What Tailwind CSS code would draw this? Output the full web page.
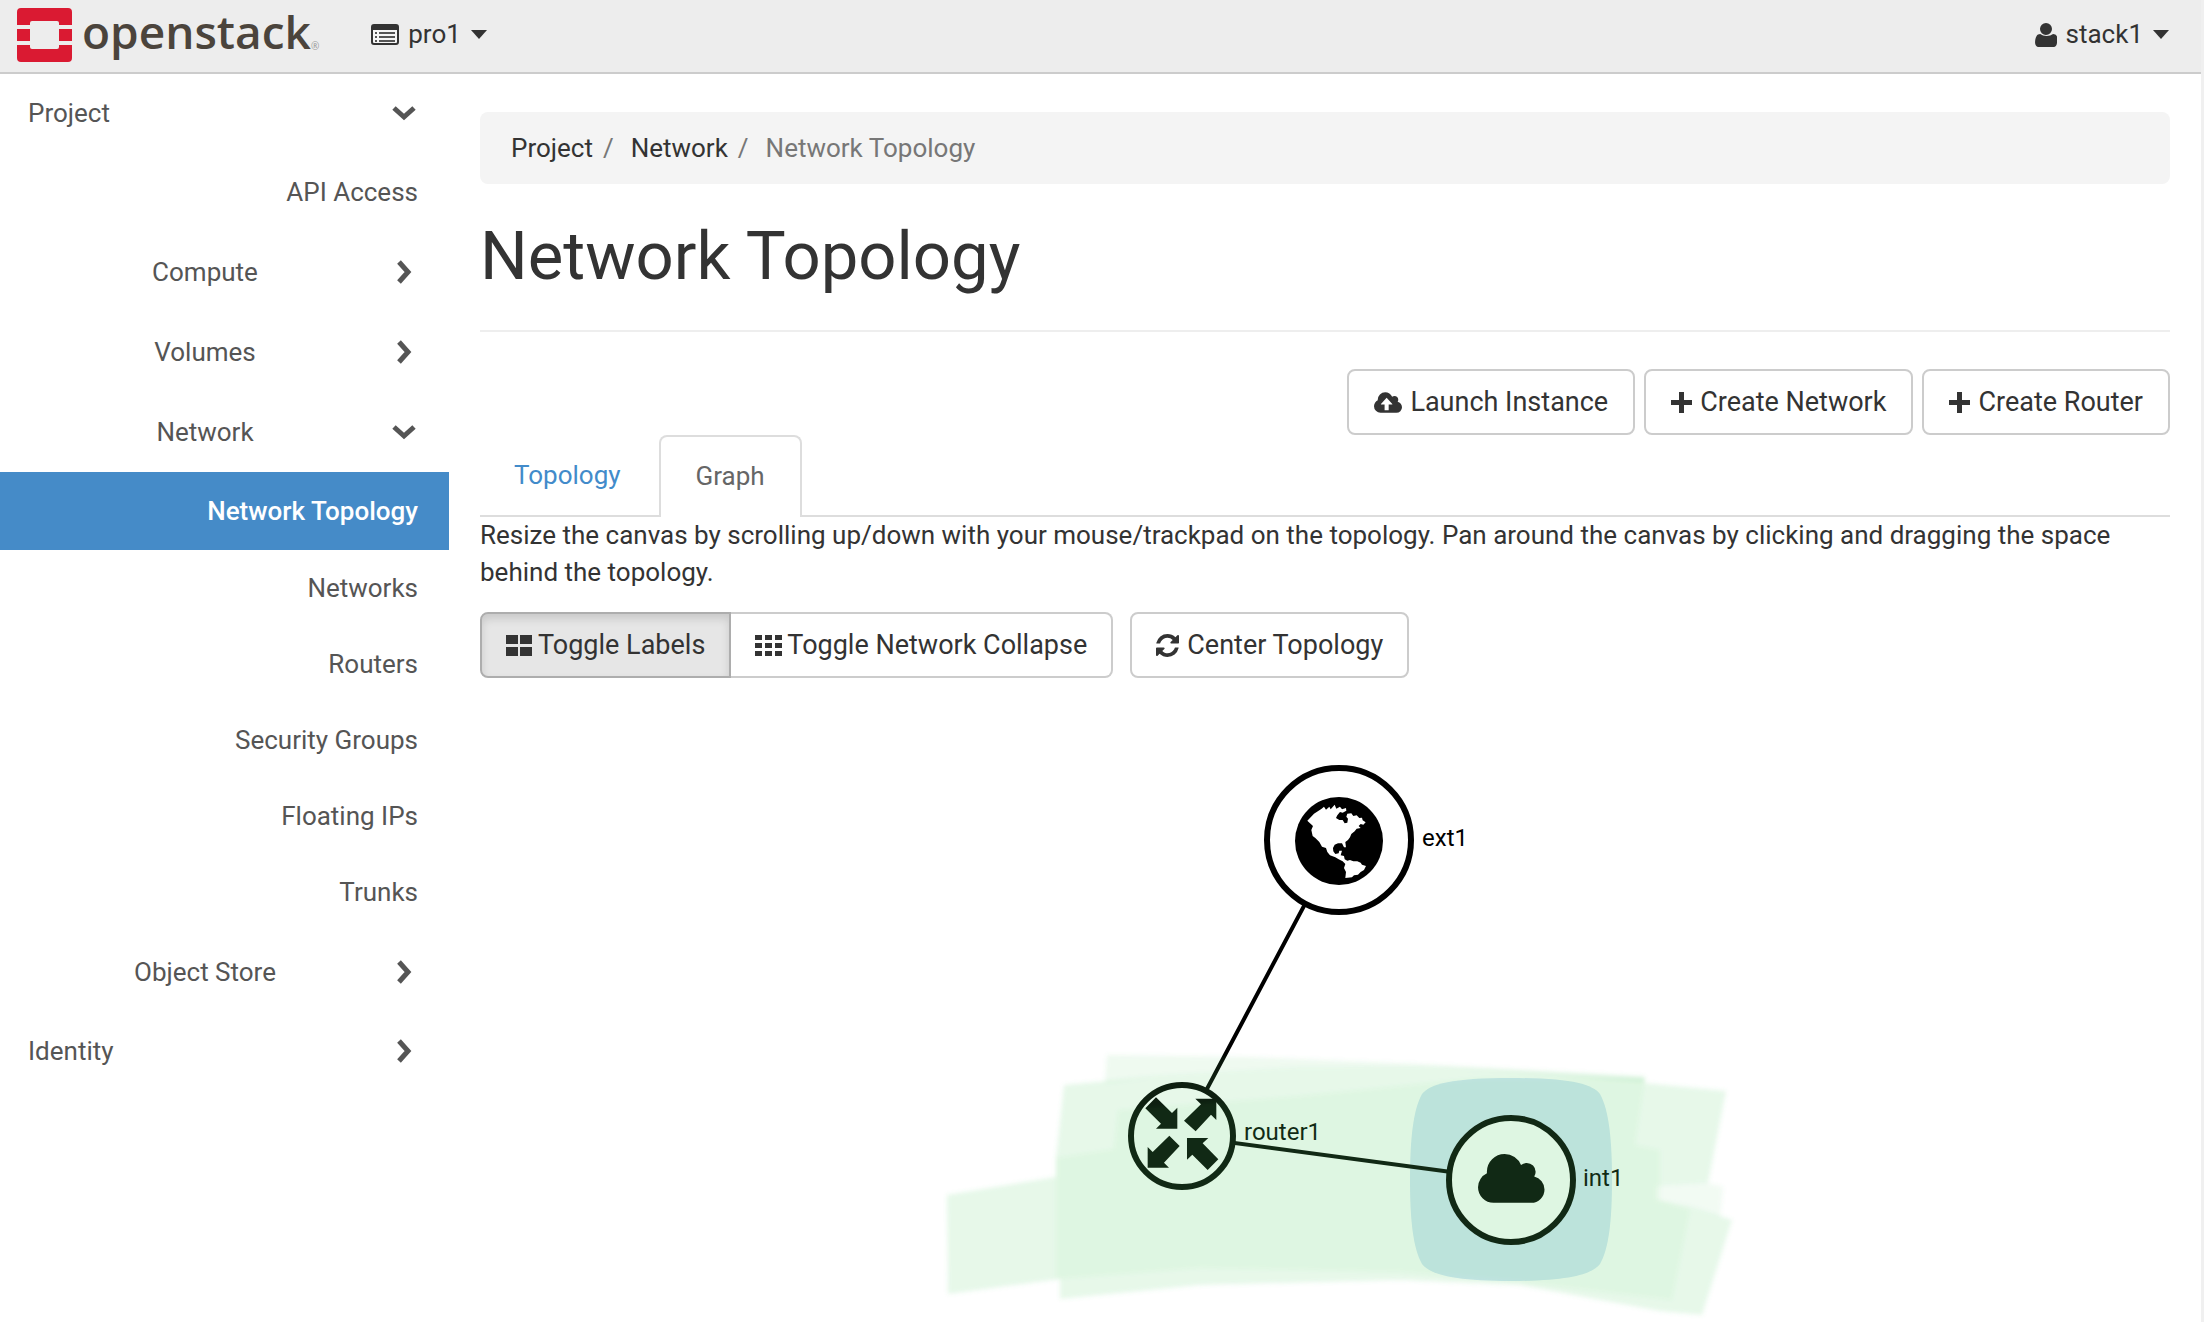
<!DOCTYPE html>
<html lang="en">
<head>
<meta charset="utf-8">
<title>Network Topology - OpenStack Dashboard</title>
<script src="https://cdn.jsdelivr.net/npm/@tailwindcss/browser@4"></script>
</head>
<body class="min-h-screen border-r-[3px] border-[#f0f0f0] bg-white font-['Roboto',sans-serif] text-[26px] leading-[37px] text-[#333]">
<svg class="hidden" aria-hidden="true">
  <symbol id="right" viewBox="0 0 28 28"><path d="M9 4l9 10-9 10" fill="none" stroke="currentColor" stroke-width="5"/></symbol>
  <symbol id="down" viewBox="0 0 28 28"><path d="M4 9l10 9 10-9" fill="none" stroke="currentColor" stroke-width="5"/></symbol>
  <symbol id="caret" viewBox="0 0 16 9"><path d="M0 0h16L8 9z" fill="currentColor"/></symbol>
  <symbol id="plus" viewBox="0 0 21 21"><path d="M8 0h5v8h8v5h-8v8H8v-8H0V8h8z" fill="currentColor"/></symbol>
</svg>

<header class="flex h-[74px] items-center border-b-2 border-[#ccc] bg-[#ededed] pr-[32px] pb-[3px] pl-[17px]">
  <a href="#" class="flex items-center text-[#4b443c]" aria-label="openstack">
    <svg class="h-[54px] w-[55px]" viewBox="0 0 55 54" fill="#da1a32"><path d="M4 0h47a4 4 0 0 1 4 4v13H42v-2a2 2 0 0 0-2-2H15a2 2 0 0 0-2 2v2H0V4a4 4 0 0 1 4-4zM0 21h13v12H0zM42 21h13v12H42zM0 37h13v2a2 2 0 0 0 2 2h25a2 2 0 0 0 2-2v-2h13v13a4 4 0 0 1-4 4H4a4 4 0 0 1-4-4z"/></svg>
    <span class="flex items-end pb-2 pl-[10px] font-['Open_Sans',sans-serif] text-[46px] leading-[54px] font-semibold">openstack<small class="text-[10px] leading-[24px] font-normal text-[#999]">®</small></span>
  </a>
  <button class="ml-[52px] flex items-center">
    <svg class="mr-[9px] h-[21px] w-[28px]" viewBox="0 0 28 21"><rect x="1" y="1" width="26" height="19" rx="2" fill="#f6f6f6" stroke="#333" stroke-width="2"/><path d="M1 1h26v5H1z" fill="#333"/><path d="M4 9h2M4 13h2M4 17h2M8 9h16M8 13h16M8 17h16" stroke="#555" stroke-width="2"/></svg>
    pro1<svg class="ml-[10px] h-[9px] w-[16px]"><use href="#caret"/></svg>
  </button>
  <button class="ml-auto flex items-center">
    <svg class="mr-[9px] h-[24px] w-[22px]" viewBox="192 128 1408 1536" preserveAspectRatio="none" fill="#333"><path d="M1600 1399q0 109-62.500 187t-150.500 78h-978q-88 0-150.500-78t-62.500-187q0-85 8.500-160.500t31.500-152 58.500-131 94-89 134.500-34.500q161 128 413 128t413-128q76 0 134.500 34.500t94 89 58.500 131 31.500 152 8.500 160.500zm-320-887q0 159-112.500 271.500t-271.500 112.500-271.500-112.500-112.500-271.500 112.500-271.500 271.500-112.500 271.500 112.500 112.500 271.500z"/></svg>
    stack1<svg class="ml-[10px] h-[9px] w-[16px]"><use href="#caret"/></svg>
  </button>
</header>

<div class="flex">
  <nav class="w-[449px] shrink-0 text-[#555]">
    <a href="#" class="flex h-[78px] items-center justify-between pr-[31px] pl-[28px]">Project<svg class="size-[28px]"><use href="#down"/></svg></a>
    <a href="#" class="flex h-[80px] items-center justify-end pr-[31px]">API Access</a>
    <a href="#" class="flex h-[80px] items-center pr-[31px] pl-[20px]"><span class="flex-1 text-center">Compute</span><svg class="size-[28px]"><use href="#right"/></svg></a>
    <a href="#" class="flex h-[80px] items-center pr-[31px] pl-[20px]"><span class="flex-1 text-center">Volumes</span><svg class="size-[28px]"><use href="#right"/></svg></a>
    <a href="#" class="flex h-[80px] items-center pr-[31px] pl-[20px]"><span class="flex-1 text-center">Network</span><svg class="size-[28px]"><use href="#down"/></svg></a>
    <a href="#" aria-current="page" class="flex h-[78px] items-center justify-end bg-[#458bc8] pr-[31px] font-medium text-white">Network Topology</a>
    <a href="#" class="flex h-[76px] items-center justify-end pr-[31px]">Networks</a>
    <a href="#" class="flex h-[76px] items-center justify-end pr-[31px]">Routers</a>
    <a href="#" class="flex h-[76px] items-center justify-end pr-[31px]">Security Groups</a>
    <a href="#" class="flex h-[76px] items-center justify-end pr-[31px]">Floating IPs</a>
    <a href="#" class="flex h-[76px] items-center justify-end pr-[31px]">Trunks</a>
    <a href="#" class="mt-[2px] flex h-[80px] items-center pr-[31px] pl-[20px]"><span class="flex-1 text-center">Object Store</span><svg class="size-[28px]"><use href="#right"/></svg></a>
    <a href="#" class="flex h-[78px] items-center justify-between pr-[31px] pl-[28px]">Identity<svg class="size-[28px]"><use href="#right"/></svg></a>
  </nav>

  <main class="min-w-0 flex-1 pt-[38px] pr-[31px] pl-[31px]">
    <ol class="flex h-[72px] items-center rounded-lg bg-[#f4f4f4] px-[31px] text-[#777]">
      <li><a href="#" class="text-[#333]">Project</a></li>
      <li><span class="pr-[17px] pl-[10px]">/</span><a href="#" class="text-[#333]">Network</a></li>
      <li><span class="pr-[17px] pl-[10px]">/</span>Network Topology</li>
    </ol>
    <h1 class="mt-[36px] border-b-2 border-[#eee] pb-[38px] text-[67px] leading-[72px]">Network Topology</h1>

    <div class="mt-[37px] flex justify-end gap-[9px] text-[27px]">
      <button class="flex h-[66px] items-center gap-2 rounded-lg border-2 border-[#ccc] px-[25px]"><svg class="h-[21px] w-[28px]" viewBox="64 128 1920 1408" fill="#333"><path fill-rule="evenodd" d="M1984 1152q0 159-112.500 271.500t-271.500 112.500h-1088q-185 0-316.500-131.500t-131.500-316.500q0-132 71-241.500t187-163.500q-2-28-2-43 0-212 150-362t362-150q158 0 286.500 88t187.500 230q70-62 166-62 106 0 181 75t75 181q0 75-41 138 129 30 213 134.500t84 239.500zM1320 928L930 500 540 928v40h250v392h280V968h250z"/></svg>Launch Instance</button>
      <button class="flex h-[66px] items-center gap-2 rounded-lg border-2 border-[#ccc] px-[25px]"><svg class="size-[21px]"><use href="#plus"/></svg>Create Network</button>
      <button class="flex h-[66px] items-center gap-2 rounded-lg border-2 border-[#ccc] px-[25px]"><svg class="size-[21px]"><use href="#plus"/></svg>Create Router</button>
    </div>

    <div class="flex h-[82px] gap-[4px] border-b-2 border-[#ddd]" role="tablist">
      <a href="#" role="tab" class="flex items-center px-[34px] text-[#428bca]">Topology</a>
      <a href="#" role="tab" aria-selected="true" class="-mb-[2px] flex items-center rounded-t-lg border-2 border-b-0 border-[#ddd] bg-white px-[35px] pb-[2px] text-[#666]">Graph</a>
    </div>
    <p>Resize the canvas by scrolling up/down with your mouse/trackpad on the topology. Pan around the canvas by clicking and dragging the space behind the topology.</p>

    <div class="mt-[21px] flex text-[27px]">
      <button aria-pressed="true" class="flex h-[66px] items-center gap-[6px] rounded-l-lg border-2 border-[#adadad] bg-[#e6e6e6] px-[24px] shadow-[inset_0_5px_9px_rgba(0,0,0,0.125)]"><svg class="h-[21px] w-[26px]" viewBox="0 0 26 21" fill="#333"><path d="M0 0h12v9H0zM14 0h12v9H14zM0 12h12v9H0zM14 12h12v9H14z"/></svg>Toggle Labels</button>
      <button class="flex h-[66px] items-center gap-[5px] rounded-r-lg border-2 border-l-0 border-[#ccc] px-[24px]"><svg class="h-[21px] w-[27px]" viewBox="0 0 27 21" fill="#333"><path d="M0 0h7v5H0zM10 0h7v5h-7zM20 0h7v5h-7zM0 8h7v5H0zM10 8h7v5h-7zM20 8h7v5h-7zM0 16h7v5H0zM10 16h7v5h-7zM20 16h7v5h-7z"/></svg>Toggle Network Collapse</button>
      <button class="ml-[17px] flex h-[66px] items-center gap-2 rounded-lg border-2 border-[#ccc] px-[24px]"><svg class="size-[23px]" viewBox="128 128 1536 1536" fill="#333"><path d="M1639 1056q0 5-1 7-64 268-268 434.500t-478 166.500q-146 0-282.500-55t-243.500-157l-129 129q-19 19-45 19t-45-19-19-45v-448q0-26 19-45t45-19h448q26 0 45 19t19 45-19 45l-137 137q71 66 161 102t187 36q134 0 250-65t186-179q11-17 53-117 8-23 30-23h192q13 0 22.500 9.500t9.500 22.500zm25-800v448q0 26-19 45t-45 19h-448q-26 0-45-19t-19-45 19-45l138-138q-148-137-349-137-134 0-250 65t-186 179q-11 17-53 117-8 23-30 23h-199q-13 0-22.500-9.500t-9.500-22.500v-7q65-268 270-434.500t480-166.500q146 0 284 55.500t245 156.500l130-129q19-19 45-19t45 19 19 45z"/></svg>Center Topology</button>
    </div>

    <svg class="mt-[22px] block w-full text-[24px]" viewBox="480 700 1690 622" role="img" aria-label="Topology graph">
      <defs><filter id="soft" x="-5%" y="-5%" width="110%" height="110%"><feGaussianBlur stdDeviation="2"/></filter></defs>
      <path d="M1511 1078C1570 1078 1592 1084 1600 1094C1609 1110 1612 1140 1612 1180C1612 1220 1609 1248 1600 1264C1592 1274 1570 1281 1511 1281C1452 1281 1430 1274 1422 1264C1413 1248 1410 1220 1410 1180C1410 1140 1413 1110 1422 1094C1430 1084 1452 1078 1511 1078z" fill="#d4e7f7"/>
      <path d="M1339 840L1182 1136L1511 1180" fill="none" stroke="#000" stroke-width="4"/>
      <g fill="#fff" stroke="#000" stroke-width="6"><circle cx="1339" cy="840" r="72"/><circle cx="1182" cy="1136" r="51"/><circle cx="1511" cy="1180" r="62"/></g>
      <!-- globe -->
      <circle cx="1339" cy="841" r="44"/>
      <path transform="translate(1240 750) scale(.3333)" fill="#fff" d="M202 212L222 191L245 176L252 170L258 179L268 170L272 178L284 164L289 176L300 170L306 178L318 174L319 182L308 188L300 186L292 196L288 204L298 210L308 210L314 220L322 218L324 206L319 200L322 191L334 190L340 198L350 196L358 204L366 203L368 211L377 217L370 224L362 222L356 228L362 234L350 236L344 244L334 252L330 262L324 270L316 276L318 292L312 292L306 280L294 280L284 284L279 294L280 304L286 312L296 310L298 302L306 302L302 316L312 318L314 328L322 332L330 330L340 334L352 334L362 338L366 344L378 348L372 360L362 366L354 374L342 376L336 382L316 384L318 366L312 354L316 342L308 334L296 328L286 322L270 316L262 306L258 294L246 290L238 276L226 264L218 258L214 240L219 228L210 220z"/>
      <!-- router arrows -->
      <path transform="translate(1100 1060) scale(.3333)" d="M168 112L136 145L183 191L168 206H232V143L216 159zM252 182L287 214L333 164L349 180V116H286L303 133zM208 227L239 258L192 308L207 323H143V261L158 276zM355 298L323 330L277 284L261 299V234H325L308 250z"/>
      <path transform="translate(1475.800 1149.600) scale(.03463)" d="M1984 1152q0 159-112.500 271.500t-271.500 112.500h-1088q-185 0-316.500-131.500t-131.500-316.500q0-132 71-241.500t187-163.500q-2-28-2-43 0-212 150-362t362-150q158 0 286.500 88t187.500 230q70-62 166-62 106 0 181 75t75 181q0 75-41 138 129 30 213 134.500t84 239.500z"/>
      <text x="1422" y="846">ext1</text><text x="1244" y="1140">router1</text><text x="1583" y="1186">int1</text>
      <!-- highlighter strokes -->
      <g fill="#5acd69" filter="url(#soft)">
        <path fill-opacity=".1" d="M1107 1055L1250 1057L1420 1064L1645 1076L1643 1082L1420 1066L1300 1067L1180 1074L1105 1083z"/>
        <path fill-opacity=".15" d="M947 1195L1056 1177V1158L1064 1085L1180 1074L1300 1067L1420 1066L1645 1078V1083L1726 1091L1708 1183L1656 1186V1200L1690 1206L1732 1220L1702 1315L1660 1311L1520 1285L1400 1280L1200 1285L1060 1299V1279L948 1294z"/>
        <path fill-opacity=".08" d="M1708 1183L1723 1187L1720 1217L1690 1206L1656 1200V1186z"/>
        <path fill-opacity=".06" d="M1056 1158L1114 1149L1118 1110L1300 1096L1480 1078L1645 1078L1635 1145L1660 1150V1200L1690 1210L1672 1300L1520 1282L1400 1272L1200 1268L1056 1279z"/>
      </g>
    </svg>
  </main>
</div>
</body>
</html>
